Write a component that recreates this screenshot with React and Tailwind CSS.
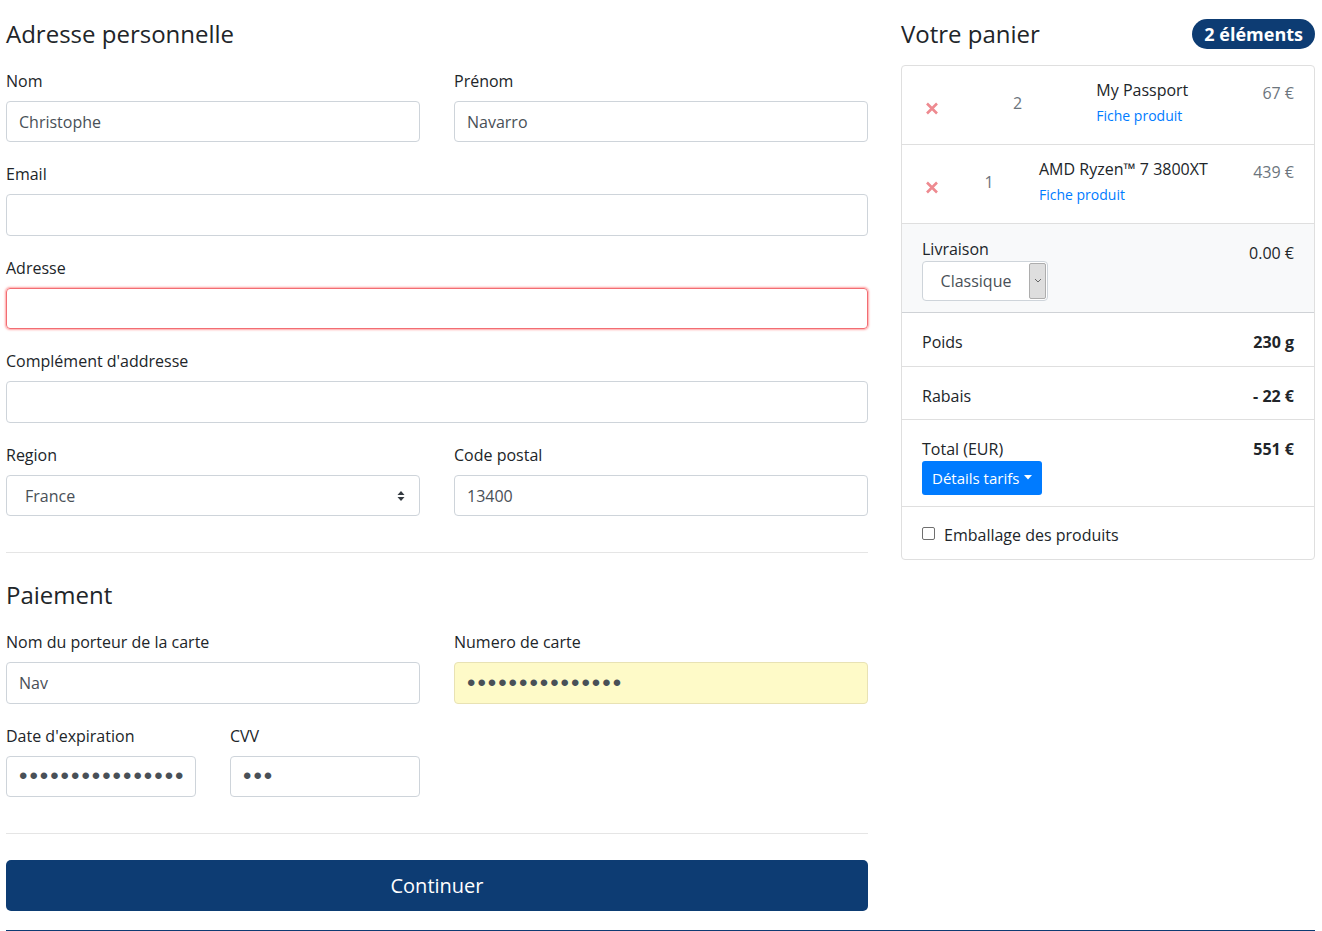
import { useState } from 'react';

const NAVY = 'bg-[#0d3c73]';

function Field({ label, value, className = '', inputClass = '', dots }) {
  return (
    <div className={className}>
      <label className="block leading-6 mb-2">{label}</label>
      <input
        readOnly
        value={value}
        className={`block w-full h-[41.5px] mb-5 px-3 rounded-[4px] border border-[#ced4da] text-[#495057] outline-none ${
          dots ? 'font-["Liberation_Sans",sans-serif] text-[24px] tracking-[2px]' : 'text-base'
        } ${inputClass}`}
      />
    </div>
  );
}

function CloseIcon() {
  return (
    <svg width="14" height="13" viewBox="0 0 14 13" className="block">
      <path d="M2 1.5 L12 11.5 M12 1.5 L2 11.5" stroke="#ee8a90" strokeWidth="2.6" strokeLinecap="butt" />
    </svg>
  );
}

function CartItem({ qty, name, price }) {
  return (
    <div className="h-[79px] border-b border-[#dfdfdf] px-5 pt-3 flex justify-between items-start">
      <div className="mt-[24px] ml-[3px]">
        <CloseIcon />
      </div>
      <span className="mt-[13px] leading-6 text-[#6c757d]">{qty}</span>
      <div>
        <div className="leading-6">{name}</div>
        <a href="#" className="block mt-[3px] text-[14px] leading-[21px] text-[#007bff]">
          Fiche produit
        </a>
      </div>
      <span className="mt-[3px] leading-6 text-[#6c757d]">{price}</span>
    </div>
  );
}

export default function App() {
  const [wrap, setWrap] = useState(false);

  return (
    <div className="w-[1322px] h-[931px] overflow-hidden bg-white text-[#212529] font-['Open_Sans',sans-serif] text-base">
      <div className="flex">
        {/* Formulaire */}
        <div className="ml-[6px] w-[862px] pt-5">
          <h4 className="text-2xl leading-[28.8px] mb-5">Adresse personnelle</h4>
          <div className="grid grid-cols-2 gap-x-[34px]">
            <Field label="Nom" value="Christophe" />
            <Field label="Prénom" value="Navarro" />
            <Field label="Email" value="" className="col-span-2" />
            <div className="col-span-2">
              <label className="block leading-6 mb-2">Adresse</label>
              <input
                readOnly
                className="block w-full h-[41.5px] mb-5 px-3 rounded-[4px] border border-[#f26d73] shadow-[0_0_2px_1px_rgba(255,90,90,0.55)] outline-none"
              />
            </div>
            <Field label="Complément d'addresse" value="" className="col-span-2" />
            <div>
              <label className="block leading-6 mb-2">Region</label>
              <div className="h-[41.5px] mb-5 pl-[18px] pr-[14px] rounded-[4px] border border-[#ced4da] text-[#495057] flex items-center justify-between">
                <span>France</span>
                <svg width="8" height="12" viewBox="0 0 8 12">
                  <path d="M4 1 L7.5 5 L0.5 5 Z M4 11 L7.5 7 L0.5 7 Z" fill="#343a40" />
                </svg>
              </div>
            </div>
            <Field label="Code postal" value="13400" />
          </div>

          <hr className="mt-4 mb-[28px] border-0 border-t border-[rgba(0,0,0,0.1)]" />

          <h4 className="text-2xl leading-[28.8px] mb-5">Paiement</h4>
          <div className="grid grid-cols-2 gap-x-[34px]">
            <Field label="Nom du porteur de la carte" value="Nav" />
            <Field
              label="Numero de carte"
              value="•••••••••••••••"
              dots
              inputClass="bg-[#fefac8] border-[#e8e2b4]"
            />
            <div className="grid grid-cols-2 gap-x-[34px]">
              <Field label="Date d'expiration" value="••••••••••••••••••••" dots />
              <Field label="CVV" value="•••" dots />
            </div>
          </div>

          <hr className="mt-4 border-0 border-t border-[rgba(0,0,0,0.1)]" />

          <button className={`mt-[26px] w-full h-[51px] rounded-[5px] ${NAVY} text-white text-xl`}>
            Continuer
          </button>
        </div>

        {/* Panier */}
        <div className="ml-[33px] w-[414px] pt-5">
          <div className="flex items-center justify-between h-[28.8px] mb-4">
            <h4 className="text-2xl leading-[28.8px]">Votre panier</h4>
            <span className={`${NAVY} text-white font-bold text-[18px] h-[30px] px-3 rounded-full flex items-center`}>
              2 éléments
            </span>
          </div>

          <div className="border border-[#dfdfdf] rounded-[4px]">
            <CartItem qty="2" name="My Passport" price="67 €" />
            <CartItem qty="1" name="AMD Ryzen™ 7 3800XT" price="439 €" />

            <div className="h-[89px] bg-[#f8f9fa] border-b border-[#cfd2d6] px-5 pt-3 flex justify-between items-start">
              <div>
                <div className="leading-6 mt-[1px]">Livraison</div>
                <div className="w-[126px] h-[40px] bg-white border border-[#ced4da] rounded-[4px] flex items-stretch text-[#495057]">
                  <span className="flex-1 flex items-center justify-center">Classique</span>
                  <span className="w-[17px] my-[1px] mr-[1px] bg-[#dedede] border border-[#adadad] rounded-[2px] flex items-center justify-center">
                    <svg width="8" height="5" viewBox="0 0 8 5">
                      <path d="M1 1 L4 4 L7 1" stroke="#666" strokeWidth="1" fill="none" />
                    </svg>
                  </span>
                </div>
              </div>
              <span className="mt-[5px] leading-6">0.00 €</span>
            </div>

            <div className="h-[54px] border-b border-[#dfdfdf] px-5 pt-[17px] flex justify-between">
              <span className="leading-6">Poids</span>
              <span className="leading-6 font-bold">230 g</span>
            </div>
            <div className="h-[53px] border-b border-[#dfdfdf] px-5 pt-[17px] flex justify-between">
              <span className="leading-6">Rabais</span>
              <span className="leading-6 font-bold">- 22 €</span>
            </div>
            <div className="h-[87px] border-b border-[#dfdfdf] px-5 pt-4 flex justify-between items-start">
              <div>
                <div className="leading-6 mt-[1px]">Total (EUR)</div>
                <button className="h-[34px] px-[10px] rounded-[3px] bg-[#007bff] text-white text-[15px] flex items-center gap-[5px]">
                  Détails tarifs
                  <svg width="8" height="5" viewBox="0 0 8 5">
                    <path d="M0 0 L8 0 L4 4.5 Z" fill="#fff" />
                  </svg>
                </button>
              </div>
              <span className="leading-6 font-bold mt-[1px]">551 €</span>
            </div>
            <label className="h-[52px] px-5 pt-[16px] flex items-start gap-[9px] cursor-pointer">
              <input
                type="checkbox"
                checked={wrap}
                onChange={() => setWrap(!wrap)}
                className="mt-[4px] w-[13px] h-[13px] appearance-none border border-[#6f6f6f] rounded-[2px] bg-white checked:bg-[#007bff]"
              />
              <span className="leading-6">Emballage des produits</span>
            </label>
          </div>
        </div>
      </div>

      <div className={`ml-[6px] w-[1309px] h-[2px] mt-[18.5px] ${NAVY}`} />
    </div>
  );
}
